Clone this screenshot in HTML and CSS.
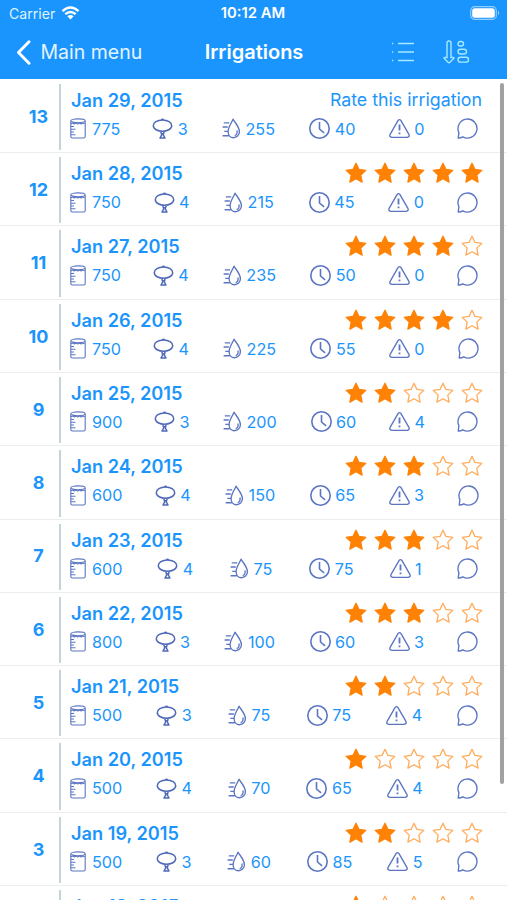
FILE: index.html
```html
<!DOCTYPE html>
<html lang="en">
<head>
<meta charset="utf-8">
<title>Irrigations</title>
<link rel="stylesheet" href="styles.css">
</head>
<body>
<svg class="sprite" aria-hidden="true">
  <symbol id="beaker" viewBox="0 0 16 21"><path d="M.8 3.200V18.400Q.8 20 2.400 20H13.600Q15.200 20 15.200 18.400V3.200"/><ellipse cx="8" cy="2.800" rx="7.200" ry="1.900"/><path d="M1 5.800l1.700-.8 1.700.9 1.700-.9 1.700.9 1.700-.9 1.700.9 1.700-.9 1.900.8M1 8.500h3M1 11.200h4.500M1 14h3M1 16.800h4.500"/></symbol>
  <symbol id="balloon" viewBox="0 0 20 21"><path d="M8.600 2.300Q10 .1 11.400 2.300M10 2c5.300 0 9.200 2.500 9.200 5.700 0 3.400-4.600 5.500-9.200 5.500S.8 11.100.8 7.700C.8 4.500 4.700 2 10 2zM8.300 13.400l.6 2.300h2.200l.6-2.300M9.100 15.800v1.400L7.500 20h5l-1.600-2.800v-1.400"/></symbol>
  <symbol id="drop" viewBox="0 0 18 21"><path d="M11 1.200C9.400 5.300 6.100 9 6.100 13.700c0 3.600 2.300 6 5.400 6s5.900-2.300 5.900-5.900C17.400 9 13.400 5 11 1.200zM14.900 12.500q1 4-2.200 5.200M1.800 4.900h5.400M.6 9h5.200M2.300 13.400h3.700M.6 17.700h6.200"/></symbol>
  <symbol id="clock" viewBox="0 0 21 21"><circle cx="10.500" cy="10.500" r="9.700"/><path d="M10.500 4v7l4.600 3.900"/></symbol>
  <symbol id="alert" viewBox="0 0 21 21"><path d="M9 2.600q1.500-2 3 0l7.900 13.800q1.100 2.600-1.700 2.900H2.800q-2.800-.3-1.700-2.900z"/><path class="mark" d="M10.500 6.400v6.200M10.500 14.600v1.600"/></symbol>
  <symbol id="chat" viewBox="0 0 21 21"><path d="M1.200 20L1.900 14.600A9.500 9.500 0 1 1 5.800 18.800Q3.500 20.200 1.200 20z"/></symbol>
  <symbol id="star" viewBox="0 0 22 22"><path d="M11 1.300l2.900 6.100 6.900.9-5 4.800 1.300 7-6.100-3.400-6.100 3.400 1.300-7-5-4.800 6.900-.9z"/></symbol>
</svg>
<div class="app">
  <header class="header">
    <div class="status">
      <div class="carrier">Carrier
        <svg class="wifi" viewBox="0 0 18 14"><path d="M1 5.200q8-7.200 16 0M3.800 8.200q5.200-4.500 10.400 0"/><path class="solid" d="M5.900 10.200q3.100-2.400 6.200 0L9 13.500z"/></svg>
      </div>
      <div class="time">10:12 AM</div>
      <svg class="battery" viewBox="0 0 30 14"><rect class="case" x=".7" y=".7" width="25.600" height="12.600" rx="3.800"/><rect class="charge" x="2.200" y="2.200" width="22.600" height="9.600" rx="2.500"/><path class="tip" d="M28 4.800q2.400 2.200 0 4.400z"/></svg>
    </div>
    <nav class="nav">
      <div class="back"><svg viewBox="0 0 14 24"><path d="M12.300 1.700L2.200 12l10.100 10.300"/></svg><span>Main menu</span></div>
      <h1>Irrigations</h1>
      <div class="actions">
        <svg class="list" viewBox="0 0 24 22"><path d="M7 2.500h16M7 11h16M7 19.500h16M1 2.500h1.200M1 11h1.200M1 19.500h1.200"/></svg>
        <svg class="sort" viewBox="0 0 27 24"><path d="M4 3q0-2 2-2t2 2v14.500h2.300q1 0 .4.900L7 22.300q-1 .9-2 0L1.300 18.400q-.6-.9.400-.9H4z"/><rect x="15" y="1.500" width="5.500" height="4.500" rx="2.250"/><rect x="15" y="9.200" width="8.500" height="4.800" rx="2.400"/><rect x="15" y="17.300" width="10.500" height="4.800" rx="2.400"/></svg>
      </div>
    </nav>
  </header>
  <main class="entries" id="entries"></main>
  <div class="scrollbar"></div>
</div>
<script src="script.js"></script>
</body>
</html>
```
FILE: styles.css
```css
* { box-sizing: border-box; }
body {
  margin: 0;
  background: #fff;
  color: #1b95fc;
  font-family: Inter, "Liberation Sans", sans-serif;
}
svg { display: block; fill: none; flex: none; }
.sprite { position: absolute; width: 0; height: 0; }
.app { position: relative; width: 507px; height: 900px; overflow: hidden; }

.header { height: 79px; background: #1b95fe; color: #fff; }
.status {
  display: grid;
  grid-template-columns: 1fr auto 1fr;
  align-items: center;
  height: 27px;
  padding: 0 7px 0 9px;
  font-size: 14.1px;
  line-height: 27px;
}
.carrier { display: flex; align-items: center; gap: 6px; color: #def2ff; }
.wifi { width: 19px; height: 14px; margin-top: -2px; stroke: #fff; stroke-width: 2.4; }
.wifi .solid { fill: #fff; stroke: none; }
.time { margin: 0 1px 0 -2px; font-weight: 600; font-size: 14.8px; }
.battery { width: 30px; height: 14px; margin-top: -1px; justify-self: end; }
.case { stroke: #91cdff; stroke-width: 1.2; }
.charge { fill: #fff; }
.tip { fill: #91cdff; }

.nav {
  display: grid;
  grid-template-columns: 1fr auto 1fr;
  align-items: center;
  height: 50px;
  padding: 0 37px 0 16px;
}
.back { display: flex; align-items: center; gap: 9.500px; font-size: 19.5px; color: #e3f4ff; }
.back svg { width: 15px; height: 25px; stroke: #fff; stroke-width: 2.8; stroke-linecap: round; stroke-linejoin: round; }
h1 { margin: 0 -10px 0 12px; font-size: 20px; font-weight: 600; line-height: 24px; }
.actions { display: flex; align-items: center; justify-content: flex-end; gap: 28px; stroke: #a6eaff; stroke-width: 1.4; }
.list { width: 24px; height: 22px; }
.sort { width: 27px; height: 24px; }

.entries { padding-top: .8px; }
.entry {
  display: grid;
  grid-template-columns: 59px 2px 1fr;
  height: 73.3px;
  border-bottom: 1.5px solid #ebedee;
}
.number {
  align-self: center;
  padding: 1.500px 0 0 18px;
  text-align: center;
  font-size: 18px;
  font-weight: 700;
  line-height: 24px;
}
.divider { margin: 4px 0 2px; background: #c3d5d6; }
.details { padding: 8px 25px 0 7px; }
.summary { display: flex; justify-content: space-between; align-items: center; height: 24px; padding-left: 3px; }
.date { font-size: 18.2px; font-weight: 600; }
.rate { font-size: 17.8px; }
.stars { display: flex; gap: 7.100px; margin-right: -1.200px; }
.star { width: 22px; height: 22px; stroke: #ffac5c; stroke-width: 1.3; stroke-linejoin: round; }
.star.full { fill: #ff8205; stroke: #ff8205; }
.stats { display: flex; justify-content: space-between; align-items: center; height: 24px; margin-top: 5px; padding: 0 3.500px 0 .5px; }
.stat { display: flex; align-items: center; gap: 4.500px; font-size: 16.2px; line-height: 24px; }
.stat:nth-child(2) { margin-left: -1.200px; }
.stat:nth-child(3) { margin-right: 1.200px; }
.icon { width: 21px; height: 21px; stroke: #5b75c2; stroke-width: 1.35; stroke-linejoin: round; }
.icon.beaker { width: 18px; stroke-width: 1.1; }
.icon.drop { width: 20px; }
.icon.balloon { stroke: #4f68b8; stroke-width: 1.5; }
.icon.clock { stroke-width: 1.6; }
.stat:first-child { gap: 5.500px; }
.mark { stroke-width: 1.8; }
.scrollbar { position: absolute; top: 83px; right: 3px; width: 4px; height: 701px; border-radius: 2px; background: #a1a1a3; }
```
FILE: script.js
```javascript
const entries = [
  [13, "Jan 29, 2015", null, [775, 3, 255, 40, 0]],
  [12, "Jan 28, 2015", 5, [750, 4, 215, 45, 0]],
  [11, "Jan 27, 2015", 4, [750, 4, 235, 50, 0]],
  [10, "Jan 26, 2015", 4, [750, 4, 225, 55, 0]],
  [9, "Jan 25, 2015", 2, [900, 3, 200, 60, 4]],
  [8, "Jan 24, 2015", 3, [600, 4, 150, 65, 3]],
  [7, "Jan 23, 2015", 3, [600, 4, 75, 75, 1]],
  [6, "Jan 22, 2015", 3, [800, 3, 100, 60, 3]],
  [5, "Jan 21, 2015", 2, [500, 3, 75, 75, 4]],
  [4, "Jan 20, 2015", 1, [500, 4, 70, 65, 4]],
  [3, "Jan 19, 2015", 2, [500, 3, 60, 85, 5]],
  [2, "Jan 18, 2015", 1, []]
];
const icons = ["beaker", "balloon", "drop", "clock", "alert"];

const icon = name => `<svg class="icon ${name}"><use href="#${name}"/></svg>`;
const stars = count => [1, 2, 3, 4, 5]
  .map(n => `<svg class="star${n <= count ? " full" : ""}"><use href="#star"/></svg>`).join("");
const stats = values => values.length === 0 ? "" : `
      <div class="stats">
        ${values.map((value, i) => `<div class="stat">${icon(icons[i])}<span>${value}</span></div>`).join("")}
        ${icon("chat")}
      </div>`;

document.getElementById("entries").innerHTML = entries.map(([number, date, rating, values]) => `
  <article class="entry">
    <div class="number">${values.length ? number : ""}</div>
    <div class="divider"></div>
    <div class="details">
      <div class="summary">
        <span class="date">${date}</span>
        ${rating === null ? '<span class="rate">Rate this irrigation</span>' : `<div class="stars">${stars(rating)}</div>`}
      </div>
      ${stats(values)}
    </div>
  </article>`).join("");
```
